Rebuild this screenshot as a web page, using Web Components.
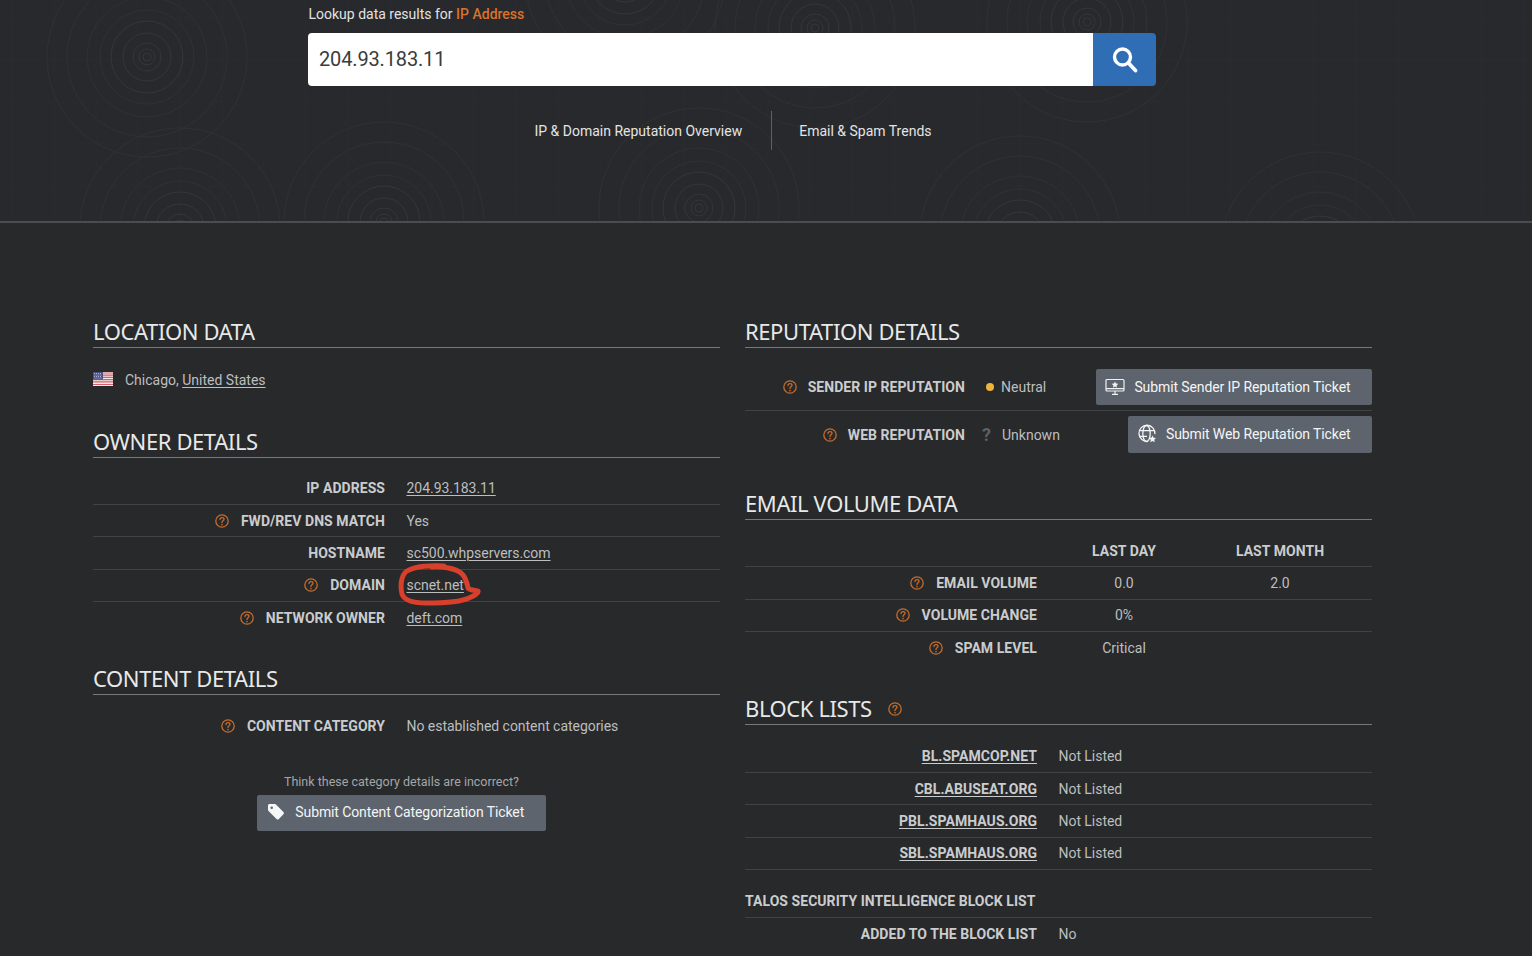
<!DOCTYPE html>
<html lang="en">
<head>
<meta charset="utf-8">
<title>IP Reputation Lookup</title>
<style>
  html, body { margin: 0; height: 956px; overflow: hidden; background: #27292b; }
  body { font-family: Roboto, "Liberation Sans", sans-serif; font-size: 14px; color: #bdbebf; }
</style>
</head>
<body>
<report-page></report-page>

<script>
/* ===== ICONS ===== */
const ICONS = {
  help: `<svg width="14" height="14" viewBox="0 0 14 14" fill="none" stroke="#c66c2c" stroke-width="1.3" stroke-linecap="round"><circle cx="7" cy="7" r="6.2"/><path d="M5 5.5C5 4.2 5.9 3.6 7 3.6c1.2 0 2 .7 2 1.7 0 1.5-2 1.6-2 3.2"/><path d="M7 10.4v.3" stroke-width="1.5"/></svg>`,
  search: `<svg width="28" height="28" viewBox="0 0 28 28" fill="none" stroke="#fff" stroke-linecap="round"><circle cx="11.5" cy="11" r="8" stroke-width="3.4"/><path d="M17.500 17l7 7.500" stroke-width="3.800"/></svg>`,
  monitor: `<svg width="20" height="18" viewBox="0 0 20 18" fill="none" stroke="#f0f1f2" stroke-width="1.2"><rect x="1" y="1.5" width="18" height="11.5" rx="1"/><path d="M1 10.6h18M7 16.4h6M10 13v3.4"/><path d="M10 3.4l1 2.1 2.3.3-1.7 1.6.4 2.3-2-1.1-2 1.1.4-2.3-1.7-1.6 2.3-.3z" fill="#f0f1f2" stroke="none"/></svg>`,
  globe: `<svg width="20" height="20" viewBox="0 0 20 20" fill="none" stroke="#f4f5f6" stroke-width="1.3"><path d="M11 17.2a8 8 0 1 1 6.9-7"/><ellipse cx="9.5" cy="9.5" rx="3.7" ry="8"/><path d="M2 6.6h15M2 12.4h8"/><path d="M15.5 11.6l1.1 2.2 2.4.3-1.8 1.7.5 2.4-2.2-1.2-2.2 1.2.5-2.4-1.8-1.7 2.4-.3z" fill="#f4f5f6" stroke="none"/></svg>`,
  tag: `<svg width="18" height="18" viewBox="0 0 18 18"><path d="M1 2.600C1 1.700 1.700 1 2.600 1h5.200c.5 0 .9.200 1.200.5l7.400 7.400c.7.700.7 1.700 0 2.400l-4.500 4.600c-.7.700-1.800.7-2.400 0L1.500 8C1.200 7.700 1 7.300 1 6.800z" fill="#f6f7f8"/><circle cx="4.700" cy="4.700" r="1.300" fill="#5d646d"/></svg>`,
  flag: `<svg width="20" height="14" viewBox="0 0 20 14"><rect width="20" height="14" fill="#f2e9ea"/><path d="M0 1h20M0 3.200h20M0 5.400h20M0 7.600h20M0 9.800h20M0 12.500h20" stroke="#d4606a" stroke-width="1.200"/><rect width="10" height="7.600" fill="#4a4f86"/><path d="M1 1.500h8M1.500 3h8M1 4.500h8M1.500 6h8" stroke="#c9cbe0" stroke-width=".8" stroke-dasharray="1 1"/></svg>`
};

/* ===== HELP ICON ===== */
class HelpIcon extends HTMLElement {
  constructor() {
    super();
    this.attachShadow({ mode: 'open' }).innerHTML = `
      <style>:host { display: inline-flex; width: 14px; height: 14px; flex: none; }</style>
      ${ICONS.help}`;
  }
}

/* ===== RINGS BEHIND THE LOOKUP ===== */
class RingBackdrop extends HTMLElement {
  constructor() {
    super();
    const centers = [[147, 57], [699, 208], [384, 222], [180, 228], [625, -22], [1087, 22], [815, 28], [1020, 236], [1320, 252]];
    const inner = [4, 8, 14, 24, 36];
    const outer = [47, 60, 80, 100];
    let rings = '';
    centers.forEach(([cx, cy]) => {
      inner.forEach(r => { rings += `<circle cx="${cx}" cy="${cy}" r="${r}" stroke="#343639"/>`; });
      outer.forEach(r => { rings += `<circle cx="${cx}" cy="${cy}" r="${r}" stroke="#2f3134"/>`; });
    });
    let grid = '';
    for (let x = 12; x < 1532; x += 42) grid += `<path d="M${x} 0V221"/>`;
    for (let y = 18; y < 221; y += 42) grid += `<path d="M0 ${y}H1532"/>`;
    this.attachShadow({ mode: 'open' }).innerHTML = `
      <style>
        :host { position: absolute; inset: 0; overflow: hidden; }
        svg { display: block; }
      </style>
      <svg width="1532" height="221" fill="none">
        <g stroke="#2b2d2f">${grid}</g>
        <g>${rings}</g>
      </svg>`;
  }
}

/* ===== LOOKUP HEADER ===== */
class LookupHero extends HTMLElement {
  constructor() {
    super();
    this.attachShadow({ mode: 'open' }).innerHTML = `
      <style>
        :host { display: block; position: relative; height: 221px; background: #28292c; border-bottom: 2px solid #4b4c50; }
        .inner { position: relative; width: 848px; margin-left: 308px; padding-top: 4px; }
        .label { height: 20px; line-height: 20px; padding-left: .5px; color: #e2e2e2; font-size: 14px; }
        .label b { font-weight: 500; color: #d9722a; }
        form { display: flex; height: 53px; margin: 9px 0 0; }
        .field { flex: 1; background: #fff; border-radius: 4px 0 0 4px; padding-left: 11px; line-height: 53px; font-size: 20px; letter-spacing: -.15px; color: #3a3b3d; }
        .go { width: 63px; background: #2f6db5; border-radius: 0 4px 4px 0; display: flex; align-items: center; justify-content: center; }
        nav { display: flex; justify-content: center; height: 39px; margin-top: 25px; padding-left: 2px; line-height: 40px; color: #e4e4e4; }
        nav span { padding: 0 29px; }
        nav span + span { border-left: 1.500px solid #5f6163; padding-left: 27px; }
      </style>
      <ring-backdrop></ring-backdrop>
      <div class="inner">
        <div class="label">Lookup data results for <b>IP Address</b></div>
        <form><div class="field">204.93.183.11</div><div class="go">${ICONS.search}</div></form>
        <nav><span>IP &amp; Domain Reputation Overview</span><span>Email &amp; Spam Trends</span></nav>
      </div>`;
  }
}

/* ===== SECTION TITLE ===== */
class SectionTitle extends HTMLElement {
  constructor() {
    super();
    this.attachShadow({ mode: 'open' }).innerHTML = `
      <style>
        :host { display: flex; align-items: center; gap: 16px; height: 27px; padding-bottom: 2px; line-height: 27px; border-bottom: 1px solid #77787a;
                font-family: "Noto Sans", Roboto, sans-serif; font-size: 22px; color: #e8e8e8; letter-spacing: -.4px; }
      </style>
      <slot></slot>`;
  }
}

/* ===== LABEL / VALUE ROW ===== */
class DataRow extends HTMLElement {
  constructor() {
    super();
    const help = this.hasAttribute('help') ? '<help-icon></help-icon>' : '';
    this.attachShadow({ mode: 'open' }).innerHTML = `
      <style>
        :host { display: flex; align-items: center; gap: 21.500px; height: 32.330px; box-sizing: border-box; border-bottom: 1px solid #404244; }
        :host([last]) { border-bottom: 0; }
        .label { width: var(--label-width, 292px); flex: none; display: flex; justify-content: flex-end; align-items: center; gap: 12px;
                 font-weight: 700; color: #cbcccd; letter-spacing: .05px; }
        .value { display: block; letter-spacing: -.04px; }
      </style>
      <div class="label">${help}<span><slot name="label"></slot></span></div>
      <div class="value"><slot></slot></div>`;
  }
}

/* ===== VOLUME ROW ===== */
class VolumeRow extends HTMLElement {
  constructor() {
    super();
    const help = this.hasAttribute('help') ? '<help-icon></help-icon>' : '';
    const bold = this.hasAttribute('head');
    this.attachShadow({ mode: 'open' }).innerHTML = `
      <style>
        :host { display: grid; grid-template-columns: 292px 174px 138px; align-items: center; height: 32.330px; box-sizing: border-box; border-bottom: 1px solid #404244; }
        :host([last]) { border-bottom: 0; }
        .label { display: flex; justify-content: flex-end; align-items: center; gap: 12px; font-weight: 700; color: #cbcccd; letter-spacing: .05px; }
        .cell { text-align: center; ${bold ? 'font-weight: 700; color: #cbcccd; letter-spacing: .05px;' : ''} }
      </style>
      <div class="label">${help}<span>${this.getAttribute('label') || ''}</span></div>
      <div class="cell">${this.getAttribute('day') || ''}</div>
      <div class="cell">${this.getAttribute('month') || ''}</div>`;
  }
}

/* ===== TICKET BUTTON ===== */
class TicketButton extends HTMLElement {
  constructor() {
    super();
    this.attachShadow({ mode: 'open' }).innerHTML = `
      <style>
        :host { display: inline-flex; align-items: center; gap: 9px; height: 36px; padding: 0 21.500px 1px 9px; box-sizing: border-box; flex: none;
                background: #5d646d; border-radius: 2px; color: #f4f5f6; font-size: 14px; letter-spacing: -.1px; white-space: nowrap; }
        .icon { display: flex; width: 20px; justify-content: center; }
      </style>
      <span class="icon">${ICONS[this.getAttribute('icon')] || ''}</span><slot></slot>`;
  }
}

/* ===== REPUTATION ROW ===== */
class ReputationRow extends HTMLElement {
  constructor() {
    super();
    this.attachShadow({ mode: 'open' }).innerHTML = `
      <style>
        :host { display: flex; align-items: center; }
        .label { width: 220px; flex: none; display: flex; justify-content: flex-end; align-items: center; gap: 11px; font-weight: 700; color: #cbcccd; letter-spacing: .05px; }
        .status { margin-left: 21px; display: flex; align-items: center; gap: 7px; }
        .end { margin-left: auto; display: flex; }
      </style>
      <div class="label"><help-icon></help-icon><span>${this.getAttribute('label')}</span></div>
      <div class="status"><slot name="status"></slot></div>
      <div class="end"><slot name="action"></slot></div>`;
  }
}

/* ===== PAGE ===== */
class ReportPage extends HTMLElement {
  constructor() {
    super();
    this.attachShadow({ mode: 'open' }).innerHTML = `
      <style>
        :host { display: block; position: relative; }
        main { display: grid; grid-template-columns: 627px 627px; column-gap: 25px; padding: 95px 0 0 93px; }
        a { color: inherit; text-decoration: underline; text-underline-offset: 2px; text-decoration-thickness: 1px; }
        .location { display: flex; align-items: center; gap: 12px; height: 32px; margin-top: 16px; }
        .location svg { display: block; margin-top: -2px; }
        .rep-list { margin-top: 21px; }
        .rep-first { padding-bottom: 5px; border-bottom: 1px solid #404244; margin-bottom: 5px; }
        .dot { width: 8px; height: 8px; border-radius: 50%; background: #edb53c; }
        .qm { width: 8px; text-align: center; margin: 0 5px 0 -4px; font-size: 18px; font-weight: 700; color: #5f6163; }
        .ask { margin-top: 31px; padding-right: 10px; display: flex; flex-direction: column; align-items: center; gap: 4px; }
        .ask p { margin: 0; font-size: 12.500px; color: #a5a6a7; line-height: 18px; }
        .talos { height: 32px; line-height: 32px; margin-top: 15px; font-weight: 700; color: #cbcccd; letter-spacing: .05px; border-bottom: 1px solid #404244; }
        .mark { position: absolute; left: 398px; top: 562px; pointer-events: none; }
      </style>
      <lookup-hero></lookup-hero>
      <main>
        <section>
          <section-title>LOCATION DATA</section-title>
          <div class="location">${ICONS.flag}<span>Chicago, <a>United States</a></span></div>
          <section-title style="margin-top:32px">OWNER DETAILS</section-title>
          <div style="margin-top:14.600px">
            <data-row><span slot="label">IP ADDRESS</span><a>204.93.183.11</a></data-row>
            <data-row help><span slot="label">FWD/REV DNS MATCH</span>Yes</data-row>
            <data-row><span slot="label">HOSTNAME</span><a>sc500.whpservers.com</a></data-row>
            <data-row help><span slot="label">DOMAIN</span><a>scnet.net</a></data-row>
            <data-row help last><span slot="label">NETWORK OWNER</span><a>deft.com</a></data-row>
          </div>
          <section-title style="margin-top:30.400px">CONTENT DETAILS</section-title>
          <data-row help last style="margin-top:15px"><span slot="label">CONTENT CATEGORY</span>No established content categories</data-row>
          <div class="ask">
            <p>Think these category details are incorrect?</p>
            <ticket-button icon="tag">Submit Content Categorization Ticket</ticket-button>
          </div>
        </section>

        <section>
          <section-title>REPUTATION DETAILS</section-title>
          <div class="rep-list">
            <reputation-row class="rep-first" label="SENDER IP REPUTATION">
              <span slot="status" class="dot"></span><span slot="status">Neutral</span>
              <ticket-button slot="action" icon="monitor">Submit Sender IP Reputation Ticket</ticket-button>
            </reputation-row>
            <reputation-row label="WEB REPUTATION">
              <span slot="status" class="qm">?</span><span slot="status">Unknown</span>
              <ticket-button slot="action" icon="globe" style="height:37px">Submit Web Reputation Ticket</ticket-button>
            </reputation-row>
          </div>
          <section-title style="margin-top:37px">EMAIL VOLUME DATA</section-title>
          <div style="margin-top:15px">
            <volume-row head label="" day="LAST DAY" month="LAST MONTH"></volume-row>
            <volume-row help label="EMAIL VOLUME" day="0.0" month="2.0"></volume-row>
            <volume-row help label="VOLUME CHANGE" day="0%"></volume-row>
            <volume-row help last label="SPAM LEVEL" day="Critical"></volume-row>
          </div>
          <section-title style="margin-top:31px">BLOCK LISTS <help-icon></help-icon></section-title>
          <div style="margin-top:15.300px">
            <data-row><a slot="label">BL.SPAMCOP.NET</a>Not Listed</data-row>
            <data-row><a slot="label">CBL.ABUSEAT.ORG</a>Not Listed</data-row>
            <data-row><a slot="label">PBL.SPAMHAUS.ORG</a>Not Listed</data-row>
            <data-row><a slot="label">SBL.SPAMHAUS.ORG</a>Not Listed</data-row>
          </div>
          <div class="talos">TALOS SECURITY INTELLIGENCE BLOCK LIST</div>
          <data-row last><span slot="label">ADDED TO THE BLOCK LIST</span>No</data-row>
        </section>
      </main>
      <svg class="mark" width="86" height="46" viewBox="0 0 86 46" fill="none" stroke="#d8402c" stroke-width="5" stroke-linecap="round" stroke-linejoin="round">
        <path d="M46 4C34 3 17 4 9 9 3 13 2 24 4 32c2 6 10 9 24 9 15 0 35-1 43-5 5-2 10-5 9-7-1-1-8 0-10-3-1-5-2-11-7-15C57 6 42 4 34 5"/>
      </svg>`;
  }
}

customElements.define('help-icon', HelpIcon);
customElements.define('ring-backdrop', RingBackdrop);
customElements.define('lookup-hero', LookupHero);
customElements.define('section-title', SectionTitle);
customElements.define('data-row', DataRow);
customElements.define('volume-row', VolumeRow);
customElements.define('ticket-button', TicketButton);
customElements.define('reputation-row', ReputationRow);
customElements.define('report-page', ReportPage);
</script>
</body>
</html>
